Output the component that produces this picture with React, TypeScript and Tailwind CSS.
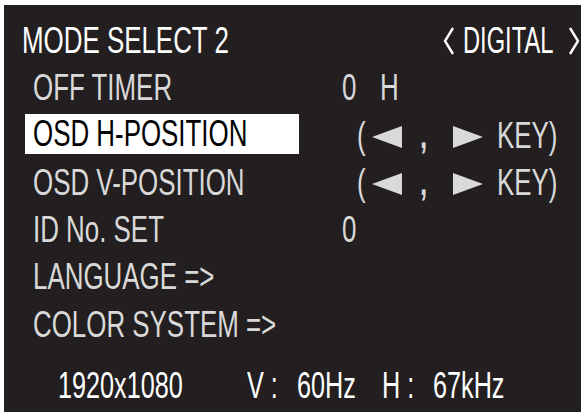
import React from 'react';

// Condensed look: Arial metrics squeezed horizontally
const sq = 'inline-block whitespace-nowrap origin-left scale-x-[0.7]';

const Tri: React.FC<{ dir: 'left' | 'right' }> = ({ dir }) => (
  <svg width="30" height="22" viewBox="0 0 30 22" className="mt-[14px] shrink-0">
    {dir === 'left' ? (
      <polygon points="0,11 30,0 30,22" fill="#d9d9d9" />
    ) : (
      <polygon points="0,0 30,11 0,22" fill="#d9d9d9" />
    )}
  </svg>
);

const KeyHint: React.FC = () => (
  <div className="flex items-start text-[#d9d9d9]">
    <div className="w-[15px] shrink-0"><span className={sq}>(</span></div>
    <div className="w-[48px] shrink-0 flex"><Tri dir="left" /></div>
    <div className="w-[33px] shrink-0"><span className={`${sq} font-bold`}>,</span></div>
    <div className="w-[44px] shrink-0 flex"><Tri dir="right" /></div>
    <div className="shrink-0"><span className={sq}>KEY)</span></div>
  </div>
);

const Bracket: React.FC<{ dir: 'left' | 'right' }> = ({ dir }) => (
  <svg width="12" height="28" viewBox="0 0 12 28" className="mt-[10px] shrink-0">
    <polyline
      points={dir === 'left' ? '10,1 2,14 10,27' : '2,1 10,14 2,27'}
      fill="none"
      stroke="#ffffff"
      strokeWidth="2.4"
    />
  </svg>
);

export default function App() {
  return (
    <div className="w-[581px] h-[412px] bg-white pt-[5px] pl-[4px] overflow-hidden font-['Liberation_Sans',Arial,sans-serif] text-[37px] leading-[47.3px]">
      <div className="h-full bg-[#231f20] pt-[12px] overflow-hidden">
        {/* Title row */}
        <div className="flex items-start h-[47.3px] pl-[18px] text-white">
          <div className="w-[421px] shrink-0"><span className={sq}>MODE SELECT 2</span></div>
          <div className="w-[20px] shrink-0 flex"><Bracket dir="left" /></div>
          <div className="w-[105px] shrink-0">
            <span className="inline-block whitespace-nowrap origin-left scale-x-[0.64]">DIGITAL</span>
          </div>
          <Bracket dir="right" />
        </div>

        {/* OFF TIMER */}
        <div className="flex items-start h-[47.3px] pl-[29px] text-[#d9d9d9]">
          <div className="w-[309px] shrink-0"><span className={sq}>OFF TIMER</span></div>
          <div className="w-[38px] shrink-0"><span className={sq}>0</span></div>
          <div className="shrink-0"><span className={sq}>H</span></div>
        </div>

        {/* OSD H-POSITION (selected) */}
        <div className="flex items-start h-[47.3px] pl-[21px]">
          <div className="mt-[2px] h-[40px] w-[274px] shrink-0 bg-white pl-[8px] leading-[40px] text-black">
            <span className={sq}>OSD H-POSITION</span>
          </div>
          <div className="ml-[58px]"><KeyHint /></div>
        </div>

        {/* OSD V-POSITION */}
        <div className="flex items-start h-[47.3px] pl-[29px] text-[#d9d9d9]">
          <div className="w-[324px] shrink-0"><span className={sq}>OSD V-POSITION</span></div>
          <KeyHint />
        </div>

        {/* ID No. SET */}
        <div className="flex items-start h-[47.3px] pl-[29px] text-[#d9d9d9]">
          <div className="w-[309px] shrink-0"><span className={sq}>ID No. SET</span></div>
          <div className="shrink-0"><span className={sq}>0</span></div>
        </div>

        <div className="h-[47.3px] pl-[29px] text-[#d9d9d9]">
          <span className={sq}>LANGUAGE =&gt;</span>
        </div>

        <div className="h-[47.3px] pl-[29px] text-[#d9d9d9]">
          <span className={sq}>COLOR SYSTEM =&gt;</span>
        </div>

        {/* Signal info */}
        <div className="flex items-start mt-[14px] h-[47.3px] pl-[54px] text-white text-[36px]">
          <div className="w-[189px] shrink-0"><span className={sq}>1920x1080</span></div>
          <div className="w-[50px] shrink-0"><span className={sq}>V :</span></div>
          <div className="w-[85px] shrink-0"><span className={sq}>60Hz</span></div>
          <div className="w-[51px] shrink-0"><span className={sq}>H :</span></div>
          <div className="shrink-0"><span className={sq}>67kHz</span></div>
        </div>
      </div>
    </div>
  );
}
